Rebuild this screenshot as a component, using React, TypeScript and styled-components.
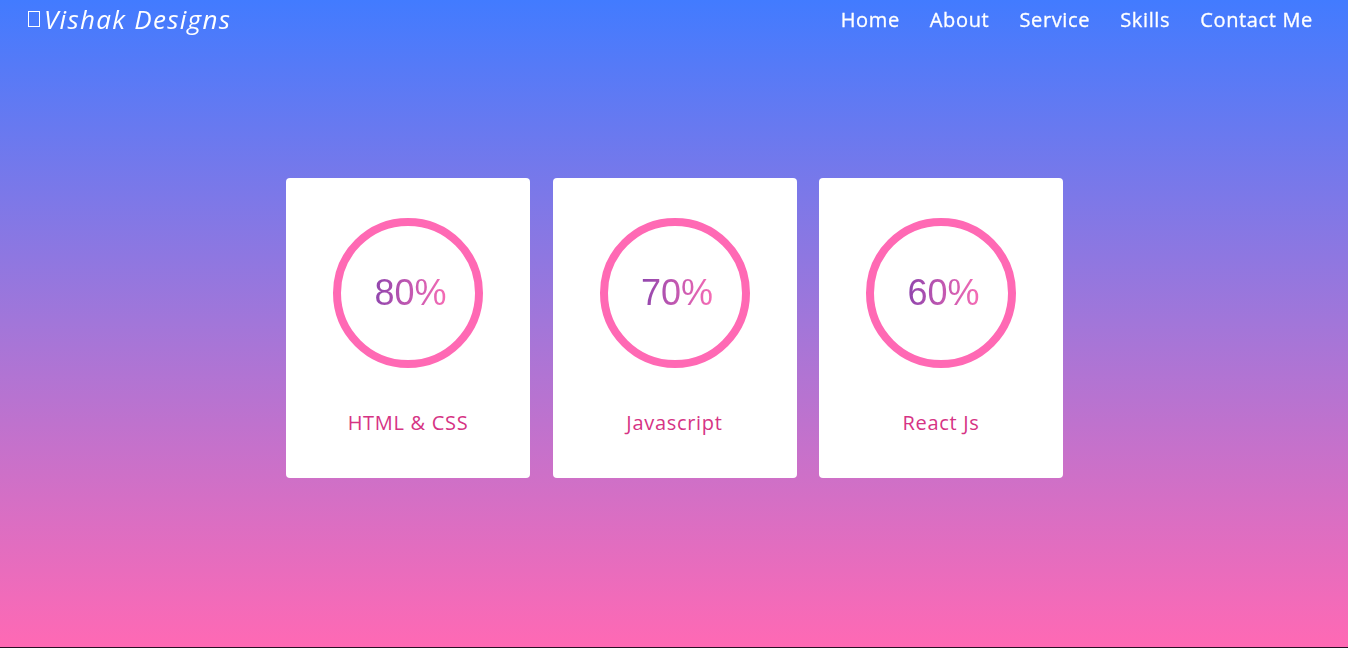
import React from 'react';
import styled, { createGlobalStyle } from 'styled-components';

const skills = [
    { title: 'HTML & CSS', percent: 80 },
    { title: 'Javascript', percent: 70 },
    { title: 'React Js', percent: 60 },
];

const links = ['Home', 'About', 'Service', 'Skills', 'Contact Me'];

const GlobalStyle = createGlobalStyle`
  * {
    box-sizing: border-box;
  }
  body {
    margin: 0;
    font-family: "Open Sans", "Noto Sans", sans-serif;
    background: #1e0b1f;
    overflow: hidden;
  }
`;

const Navbar = styled.header`
  position: fixed;
  top: 0;
  left: 0;
  right: 0;
  height: 38px;
  display: flex;
  align-items: center;
  justify-content: space-between;
  padding: 0 35px 0 28px;
  z-index: 10;
`;

const Logo = styled.a`
  display: flex;
  align-items: center;
  gap: 4px;
  color: #fff;
  font-size: 26px;
  font-style: italic;
  letter-spacing: 1.3px;
  text-decoration: none;
`;

const Tofu = styled.span`
  display: inline-block;
  width: 12px;
  height: 16px;
  border: 1.5px solid #fff;
`;

const NavList = styled.ul`
  display: flex;
  gap: 30px;
  margin: 0;
  padding: 0;
  list-style: none;
`;

const NavLink = styled.a`
  color: #fff;
  font-size: 20px;
  font-weight: 500;
  letter-spacing: 0.65px;
  text-decoration: none;
  -webkit-text-stroke: 0.3px #fff;
`;

const Hero = styled.section`
  height: 647px;
  background: linear-gradient(to bottom, #427bff 0%, #a276d9 50%, #ff69b4 100%);
  display: flex;
  align-items: center;
  justify-content: center;
  padding-top: 8px;
`;

const CardRow = styled.div`
  display: flex;
  gap: 22.5px;
  margin-left: 1px;
`;

const Card = styled.div`
  width: 244px;
  height: 300px;
  background: #fff;
  border-radius: 4px;
  padding: 40px 0;
  display: flex;
  flex-direction: column;
  align-items: center;
`;

const Circle = styled.div`
  width: 150px;
  height: 150px;
  border-radius: 50%;
  border: 8px solid #ff69b4;
  display: flex;
  align-items: center;
  justify-content: center;
`;

const Percent = styled.span`
  font-family: "Liberation Sans", Arial, sans-serif;
  font-size: 36px;
  margin-left: 5px;
  background: linear-gradient(to right, #8f45ad, #f76cb4);
  -webkit-background-clip: text;
  background-clip: text;
  color: transparent;
`;

const Label = styled.div`
  margin-top: 40px;
  line-height: 30px;
  font-size: 20px;
  color: #d63384;
  letter-spacing: 0.7px;
`;

const Footer = styled.div`
  height: 1px;
  background: #2a0f25;
`;

export default function App() {
    return (
        <>
            <GlobalStyle />
            <Navbar>
                <Logo href="#"><Tofu />Vishak Designs</Logo>
                <nav>
                    <NavList>
                        {links.map((link) => (
                            <li key={link}>
                                <NavLink href="#">{link}</NavLink>
                            </li>
                        ))}
                    </NavList>
                </nav>
            </Navbar>
            <Hero>
                <CardRow>
                    {skills.map(({ title, percent }) => (
                        <Card key={title}>
                            <Circle>
                                <Percent>{percent}%</Percent>
                            </Circle>
                            <Label>{title}</Label>
                        </Card>
                    ))}
                </CardRow>
            </Hero>
            <Footer />
        </>
    );
}
